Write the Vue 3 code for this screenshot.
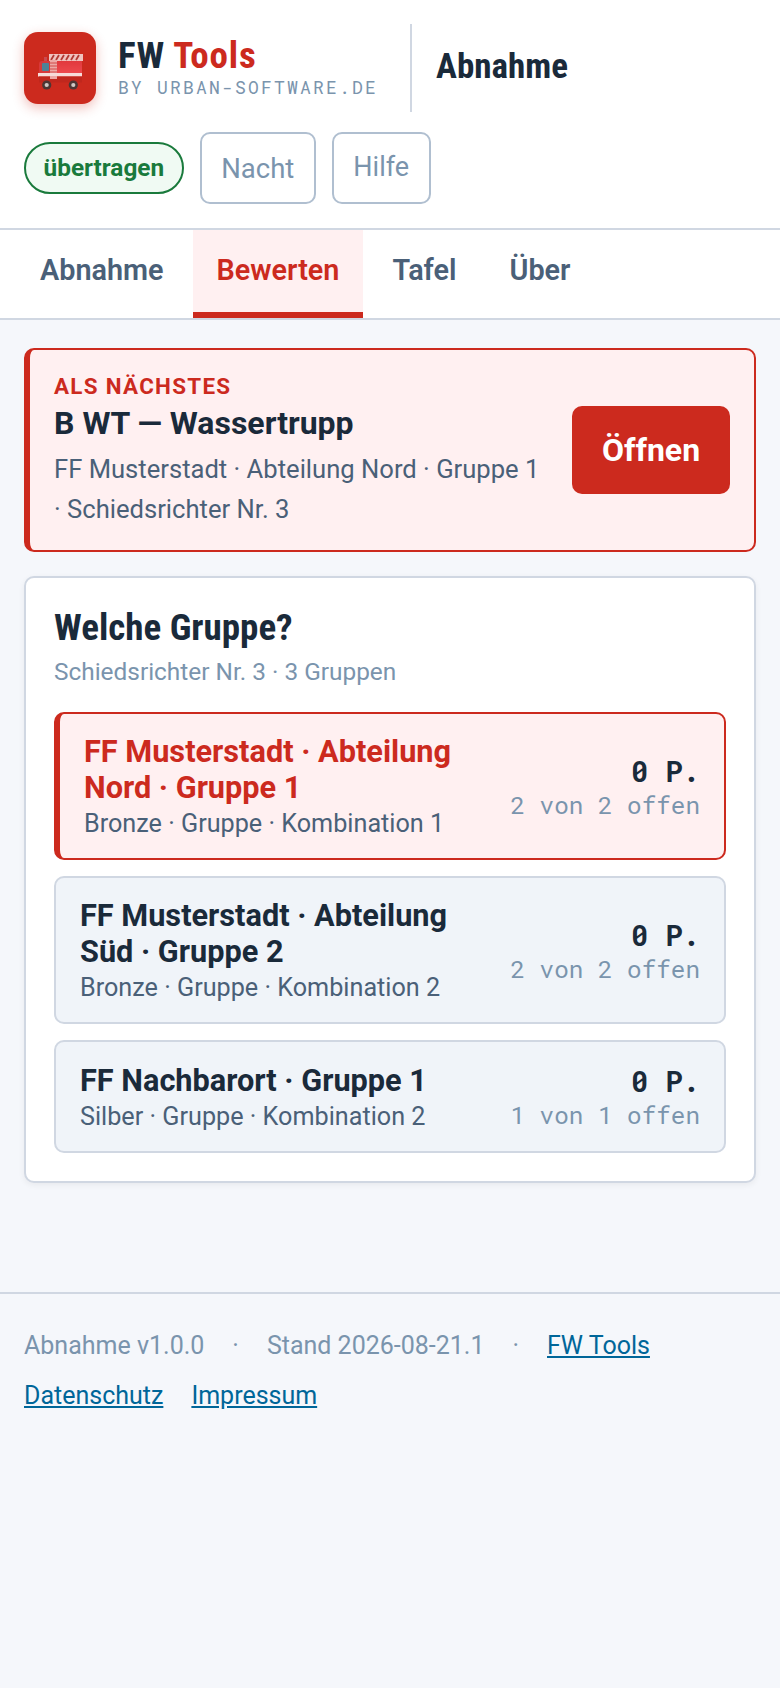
<script setup>
const groups = [
  { name: 'FF Musterstadt · Abteilung Nord · Gruppe 1', sub: 'Bronze · Gruppe · Kombination 1', open: '2 von 2 offen', active: true },
  { name: 'FF Musterstadt · Abteilung Süd · Gruppe 2', sub: 'Bronze · Gruppe · Kombination 2', open: '2 von 2 offen', active: false },
  { name: 'FF Nachbarort · Gruppe 1', sub: 'Silber · Gruppe · Kombination 2', open: '1 von 1 offen', active: false }
]
const tabs = ['Abnahme', 'Bewerten', 'Tafel', 'Über']
</script>

<template>
  <div class="page">
    <header class="header">
      <div class="brand-row">
        <div class="logo">
          <svg viewBox="0 0 72 72" width="72" height="72">
            <defs>
              <linearGradient id="body" x1="0" y1="0" x2="0" y2="1">
                <stop offset="0" stop-color="#e0383c" />
                <stop offset="1" stop-color="#ee4a4e" />
              </linearGradient>
            </defs>
            <rect x="20" y="25" width="3" height="4" fill="#c94a50" />
            <path d="M15 41v-9q0-3 3-3h8v12z" fill="#d8393a" />
            <rect x="18" y="31" width="7" height="8" rx="1" fill="#4f8296" />
            <rect x="26" y="28" width="32" height="14" fill="url(#body)" />
            <rect x="25" y="22" width="34" height="7" fill="#f0c4c0" />
            <path d="M27 28l3-5M32 28l3-5M37 28l3-5M42 28l3-5M47 28l3-5M52 28l3-5" stroke="#b23a34" stroke-width="1.8" />
            <rect x="26" y="28" width="7" height="19" fill="#eda9a6" />
            <path d="M26 31h7M26 34h7M26 37h7M26 40h7M26 43h7" stroke="#d24a48" stroke-width="1" />
            <rect x="14" y="41" width="44" height="3.5" fill="#f7dcd9" />
            <rect x="15" y="44.5" width="43" height="6" fill="#c0271d" />
            <rect x="26" y="44" width="7" height="3" fill="#eda9a6" />
            <circle cx="22.7" cy="53" r="4.6" fill="#4b3634" />
            <circle cx="22.7" cy="53" r="2.1" fill="#cfc9c5" />
            <circle cx="49.3" cy="53" r="4.6" fill="#4b3634" />
            <circle cx="49.3" cy="53" r="2.1" fill="#cfc9c5" />
          </svg>
        </div>
        <div class="brand">
          <div class="brand-title">FW <span class="red">Tools</span></div>
          <div class="brand-by">BY URBAN-SOFTWARE.DE</div>
        </div>
        <div class="page-title">Abnahme</div>
      </div>
      <div class="actions">
        <span class="status">übertragen</span>
        <button class="ghost nacht">Nacht</button>
        <button class="ghost hilfe">Hilfe</button>
      </div>
    </header>

    <nav class="tabs">
      <div v-for="t in tabs" :key="t" class="tab" :class="{ on: t === 'Bewerten' }">{{ t }}</div>
    </nav>

    <main class="main">
      <section class="next">
        <div class="next-text">
          <div class="next-label">ALS NÄCHSTES</div>
          <div class="next-title">B WT — Wassertrupp</div>
          <div class="next-sub">FF Musterstadt · Abteilung Nord · Gruppe 1 · Schiedsrichter Nr. 3</div>
        </div>
        <button class="open">Öffnen</button>
      </section>

      <section class="card">
        <h2 class="card-title">Welche Gruppe?</h2>
        <div class="card-sub">Schiedsrichter Nr. 3 · 3 Gruppen</div>
        <div class="list">
          <div v-for="g in groups" :key="g.name" class="row" :class="{ active: g.active }">
            <div class="row-text">
              <div class="row-name">{{ g.name }}</div>
              <div class="row-sub">{{ g.sub }}</div>
            </div>
            <div class="row-score">
              <div class="points">0 P.</div>
              <div class="open-count">{{ g.open }}</div>
            </div>
          </div>
        </div>
      </section>
    </main>

    <footer class="footer">
      <div><span>Abnahme v1.0.0</span><span class="dot">·</span><span>Stand 2026-08-21.1</span><span class="dot">·</span><a>FW Tools</a></div>
      <div class="links"><a>Datenschutz</a><a>Impressum</a></div>
    </footer>
  </div>
</template>

<style>
html, body { background: #f5f7fb; }
</style>

<style scoped>
.page {
  min-height: 1688px;
  background: #f5f7fb;
  font-family: Roboto, "Liberation Sans", sans-serif;
  color: #1a2a3a;
}
.header {
  background: #fff;
  border-bottom: 2px solid #d0d7e2;
  height: 230px;
  box-sizing: border-box;
  padding: 24px 24px 0;
}
.brand-row {
  display: flex;
  align-items: center;
  height: 88px;
}
.logo {
  width: 72px;
  height: 72px;
  flex: none;
  border-radius: 14px;
  background: #cc2a1e;
  box-shadow: 0 4px 12px rgba(204, 42, 30, .3);
}
.logo svg { display: block; filter: blur(.4px); }
.brand { margin-left: 22px; width: 292px; }
.brand-title {
  font-size: 37px;
  font-weight: 700;
  font-stretch: 75%;
  line-height: 36px;
  margin-bottom: 2px;
  letter-spacing: .8px;
}
.red { color: #cc2a1e; }
.brand-by {
  font-family: "Roboto Mono", "DejaVu Sans Mono", monospace;
  font-size: 18px;
  letter-spacing: 2.2px;
  color: #7a94ad;
  line-height: 22px;
}
.page-title {
  border-left: 2px solid #d0d7e2;
  height: 88px;
  line-height: 86px;
  padding-left: 24px;
  font-size: 35px;
  font-weight: 700;
  font-stretch: 75%;
}
.actions {
  display: flex;
  align-items: center;
  gap: 16px;
  margin-top: 20px;
}
.status {
  border: 2px solid #1a7a3c;
  border-radius: 26px;
  background: #f0faf3;
  color: #1a7a3c;
  font-size: 24.4px;
  font-weight: 700;
  padding: 0 17.5px;
  line-height: 48px;
}
.ghost {
  font-family: inherit;
  background: #fff;
  border: 2px solid #b0bfd0;
  border-radius: 10px;
  color: #7a94ad;
  height: 72px;
  padding: 0 19.5px;
}
.nacht { font-size: 27.5px; }
.hilfe { font-size: 27px; padding-bottom: 2px; }
.tabs {
  display: flex;
  gap: 5px;
  height: 90px;
  box-sizing: border-box;
  background: #fff;
  border-bottom: 2px solid #d0d7e2;
  padding: 0 16px;
}
.tab {
  padding: 0 24px;
  font-size: 28.8px;
  font-weight: 600;
  color: #4a6078;
  line-height: 80px;
  height: 88px;
  box-sizing: border-box;
}
.tab.on {
  color: #cc2a1e;
  background: #fff0f1;
  border-bottom: 6px solid #cc2a1e;
}
.main {
  padding: 28px 24px 0;
  height: 972px;
  box-sizing: border-box;
}
.next {
  display: flex;
  align-items: center;
  gap: 24px;
  background: #fff0f1;
  border: 2px solid #cc2a1e;
  border-left-width: 6px;
  border-radius: 10px;
  padding: 22px 24px;
  height: 204px;
  box-sizing: border-box;
}
.next-text { flex: 1; }
.next-label {
  color: #cc2a1e;
  font-size: 22.4px;
  font-weight: 700;
  letter-spacing: 1.3px;
  line-height: 28px;
  padding-top: 1px;
}
.next-title {
  font-size: 32px;
  font-weight: 700;
  line-height: 42px;
  padding-top: 2px;
}
.next-sub {
  font-size: 25.6px;
  color: #4a6078;
  line-height: 40px;
  margin-top: 5px;
}
.open {
  font-family: inherit;
  width: 158px;
  height: 88px;
  flex: none;
  border: 0;
  border-radius: 10px;
  background: #cc2a1e;
  color: #fff;
  font-size: 32px;
  font-weight: 700;
}
.card {
  margin-top: 24px;
  background: #fff;
  border: 2px solid #d0d7e2;
  border-radius: 10px;
  box-shadow: 0 2px 6px rgba(0, 0, 0, .06);
  padding: 28px 28px 28px;
}
.card-title {
  margin: 0;
  font-size: 37px;
  font-weight: 700;
  font-stretch: 75%;
  line-height: 44px;
}
.card-sub {
  font-size: 24.4px;
  color: #7a94ad;
  line-height: 32px;
  margin-top: 6px;
}
.list {
  display: flex;
  flex-direction: column;
  gap: 16px;
  margin-top: 24px;
}
.row {
  display: flex;
  align-items: center;
  justify-content: space-between;
  gap: 16px;
  background: #f0f4f9;
  border: 2px solid #d0d7e2;
  border-radius: 10px;
  padding: 20px 24px 17px;
}
.row.active {
  background: #fff0f1;
  border-color: #cc2a1e;
  border-left-width: 6px;
}
.row-text { width: 380px; }
.row-name {
  font-size: 30.7px;
  font-weight: 700;
  line-height: 36px;
}
.active .row-name { color: #cc2a1e; }
.row-sub {
  font-size: 25.2px;
  color: #4a6078;
  line-height: 35px;
}
.row-score {
  text-align: right;
  font-family: "Roboto Mono", "DejaVu Sans Mono", monospace;
  padding-bottom: 3px;
}
.points {
  font-size: 28.8px;
  font-weight: 800;
  line-height: 38px;
}
.open-count {
  font-size: 24.3px;
  color: #7a94ad;
  line-height: 31px;
}
.footer {
  border-top: 2px solid #d0d7e2;
  padding: 27px 24px;
  font-size: 25px;
  line-height: 50px;
  color: #7a94ad;
}
.dot { margin: 0 28px; }
.footer a { color: #006699; text-decoration: underline; }
.links { display: flex; gap: 28px; }
</style>
